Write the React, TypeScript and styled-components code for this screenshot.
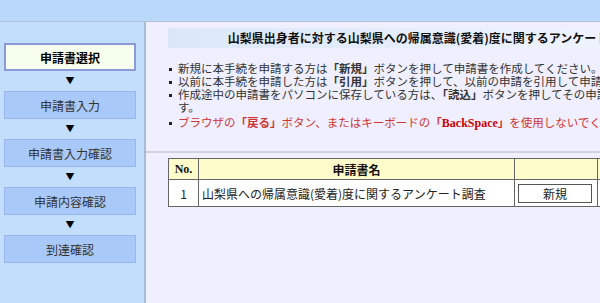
import React from 'react'
import styled, { createGlobalStyle } from 'styled-components'

const GlobalStyle = createGlobalStyle`
  html, body {
    margin: 0;
    padding: 0;
    overflow: hidden;
    background: #efefff;
  }
  body {
    font-family: "Noto Sans CJK JP", "Liberation Sans", sans-serif;
    font-size: 12px;
    color: #222;
  }
`

const steps = ['申請書選択', '申請書入力', '申請書入力確認', '申請内容確認', '到達確認']

const App: React.FC = () => {
  return (
    <Page>
      <GlobalStyle />
      <TopBar />
      <Main>
        <SideNav>
          {steps.map((label, i) => (
            <React.Fragment key={label}>
              {i > 0 && <Arrow>▼</Arrow>}
              <Step $active={i === 0}>{label}</Step>
            </React.Fragment>
          ))}
        </SideNav>

        <Content>
          <Title>山梨県出身者に対する山梨県への帰属意識(愛着)度に関するアンケート調査</Title>

          <Notes>
            <Note>
              <span>新規に本手続を申請する方は<Em>「新規」</Em>ボタンを押して申請書を作成してください。</span>
            </Note>
            <Note>
              <span>以前に本手続を申請した方は<Em>「引用」</Em>ボタンを押して、以前の申請を引用して申請書を作成してください。</span>
            </Note>
            <Note>
              <span>作成途中の申請書をパソコンに保存している方は、<Em>「読込」</Em>ボタンを押してその申請書を読み込んで申請することができます。</span>
            </Note>
            <Note $warn>
              <span>
                ブラウザの<Em>「戻る」</Em>ボタン、またはキーボードの<Em>「<Key>BackSpace</Key>」</Em>を使用しないでください。
              </span>
            </Note>
          </Notes>

          <Rule />

          <FormTable>
            <colgroup>
              <col style={{ width: 30 }} />
              <col style={{ width: 316 }} />
              <col style={{ width: 83 }} />
              <col />
            </colgroup>
            <thead>
              <tr>
                <HeadCell $serif>No.</HeadCell>
                <HeadCell>申請書名</HeadCell>
                <HeadCell />
                <HeadCell />
              </tr>
            </thead>
            <tbody>
              <tr>
                <Cell $center>1</Cell>
                <Cell>山梨県への帰属意識(愛着)度に関するアンケート調査</Cell>
                <Cell>
                  <ActionButton>新規</ActionButton>
                </Cell>
                <Cell />
              </tr>
            </tbody>
          </FormTable>
        </Content>
      </Main>
    </Page>
  )
}

const Page = styled.div`
  width: 840px;
  min-height: 303px;
  display: flex;
  flex-direction: column;
`

const TopBar = styled.div`
  height: 21px;
  background: #bad8f9;
  border-bottom: 1px solid #b4c0d2;
`

const Main = styled.div`
  display: flex;
  flex: 1;
  min-height: 281px;
`

const SideNav = styled.nav`
  width: 146px;
  flex: none;
  padding: 21px 0 0 4px;
  box-sizing: border-box;
  background: #c2defc;
  border-right: 2px solid #a9bcd4;
`

const Step = styled.div<{ $active?: boolean }>`
  width: 132px;
  height: 28px;
  box-sizing: border-box;
  display: flex;
  align-items: center;
  justify-content: center;
  font-size: 12px;
  background: ${(p) => (p.$active ? '#f6ffee' : '#a9c9f9')};
  border: ${(p) => (p.$active ? '2px solid #8e9ad8' : '1px solid #9ab6ec')};
  font-weight: ${(p) => (p.$active ? 'bold' : 'normal')};
  color: ${(p) => (p.$active ? '#000' : '#333')};
`

const Arrow = styled.div`
  width: 132px;
  height: 20px;
  line-height: 20px;
  text-align: center;
  font-size: 9px;
  color: #000;
`

const Content = styled.main`
  flex: 1;
  background: #efefff;
  padding-top: 6px;
`

const Title = styled.div`
  margin-left: 22px;
  width: 524px;
  height: 20px;
  line-height: 20px;
  text-align: center;
  font-weight: bold;
  font-size: 12px;
  color: #111;
  background: linear-gradient(to right, #dbe7f8, #f3f5ff);
`

const Notes = styled.ul`
  list-style: none;
  margin: 14px 0 0 22px;
  padding: 0;
  width: 652px;
`

const Note = styled.li<{ $warn?: boolean }>`
  display: flex;
  line-height: 13px;
  font-size: 11.5px;
  color: ${(p) => (p.$warn ? '#d03434' : '#333')};
  margin-top: ${(p) => (p.$warn ? '2px' : '0')};

  &::before {
    content: '';
    flex: none;
    width: 3px;
    height: 3px;
    margin: 6px 6px 0 1px;
    background: #222;
  }
`

const Em = styled.b`
  font-weight: bold;
`

const Key = styled.span`
  font-family: "Liberation Serif", serif;
  font-size: 12px;
  color: #c00;
`

const Rule = styled.hr`
  margin: 21px 0 0;
  border: 0;
  border-top: 2px solid #d2d2de;
`

const FormTable = styled.table`
  margin: 5px 0 0 22px;
  width: 600px;
  border-collapse: collapse;
  table-layout: fixed;
`

const HeadCell = styled.th<{ $serif?: boolean }>`
  height: 20px;
  padding: 0;
  background: #fffccc;
  border: 1px solid #666;
  font-weight: bold;
  font-size: 12px;
  text-align: center;
  color: #111;
  font-family: ${(p) => (p.$serif ? '"Liberation Serif", serif' : 'inherit')};
`

const Cell = styled.td<{ $center?: boolean }>`
  height: 26px;
  padding: 0 3px;
  background: #fff;
  border: 1px solid #666;
  font-size: 12px;
  color: #222;
  text-align: ${(p) => (p.$center ? 'center' : 'left')};
`

const ActionButton = styled.button`
  width: 74px;
  height: 19px;
  padding: 0;
  background: #fff;
  border: 1px solid #555;
  font-family: inherit;
  font-size: 12px;
  color: #222;
`

export default App
